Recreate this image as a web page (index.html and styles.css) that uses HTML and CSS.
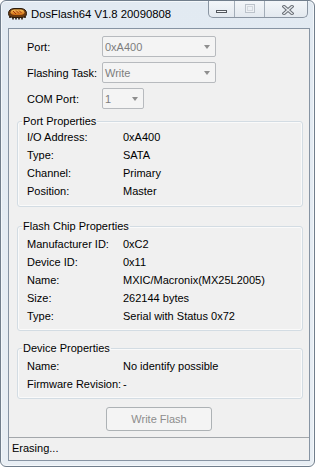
FILE: index.html
```
<!DOCTYPE html>
<html lang="en">
<head>
<meta charset="utf-8">
<title>DosFlash64 V1.8 20090808</title>
<link rel="stylesheet" href="styles.css">
</head>
<body>
<div class="window">
  <div class="titlebar">
    <svg class="app-icon" width="21" height="13" viewBox="0 0 21 13">
      <defs>
        <linearGradient id="chipTop" x1="0" y1="0" x2="0" y2="1">
          <stop offset="0" stop-color="#f6c25a"/>
          <stop offset="1" stop-color="#d06a10"/>
        </linearGradient>
      </defs>
      <path d="M3 9 L3 11 M6 10 L6 12.5 M9 10 L9 12.5 M12 10 L12 12.5 M15 10 L15 12.5 M18 9 L18 11" stroke="#2a1a0a" stroke-width="1.6"/>
      <path d="M1.5 6.5 Q1.5 2 7 1.5 L14 1.5 Q19.5 2 19.5 6.5 Q19.5 10.5 14 10.5 L7 10.5 Q1.5 10.5 1.5 6.5 Z" fill="#6a3a10" stroke="#2a1a0a" stroke-width="1"/>
      <path d="M3.5 5.5 Q4 2.8 7.5 2.6 L13.5 2.6 Q17 2.8 17.5 5.5 Q17 7.8 13.5 8 L7.5 8 Q4 7.8 3.5 5.5 Z" fill="url(#chipTop)"/>
      <path d="M6 4 L9 7 M9 3.5 L12 6.5 M12 3.5 L14.5 6" stroke="#a0300c" stroke-width="1"/>
    </svg>
    <span class="title">DosFlash64 V1.8 20090808</span>
    <div class="caption-buttons">
      <div class="cap cap-min"><span class="glyph-min"></span></div>
      <div class="cap cap-max"><span class="glyph-max"></span></div>
      <div class="cap cap-close">
        <svg width="12" height="10" viewBox="0 0 12 10">
          <path d="M2 1.5 L10 8.5 M10 1.5 L2 8.5" stroke="#6a6f76" stroke-width="3.4" stroke-linecap="square"/>
          <path d="M2 1.5 L10 8.5 M10 1.5 L2 8.5" stroke="#e4e8ec" stroke-width="1.4" stroke-linecap="square"/>
        </svg>
      </div>
    </div>
  </div>
  <div class="client">
    <div class="settings">
      <span class="setting-label">Port:</span>
      <div class="combo combo-wide"><span class="combo-text">0xA400</span><span class="combo-arrow"></span></div>
      <span class="setting-label">Flashing Task:</span>
      <div class="combo combo-wide"><span class="combo-text">Write</span><span class="combo-arrow"></span></div>
      <span class="setting-label">COM Port:</span>
      <div class="combo combo-narrow"><span class="combo-text">1</span><span class="combo-arrow"></span></div>
    </div>

    <fieldset class="group group-port">
      <legend>Port Properties</legend>
      <div class="props">
        <span>I/O Address:</span><span>0xA400</span>
        <span>Type:</span><span>SATA</span>
        <span>Channel:</span><span>Primary</span>
        <span>Position:</span><span>Master</span>
      </div>
    </fieldset>

    <fieldset class="group group-chip">
      <legend>Flash Chip Properties</legend>
      <div class="props">
        <span>Manufacturer ID:</span><span>0xC2</span>
        <span>Device ID:</span><span>0x11</span>
        <span>Name:</span><span>MXIC/Macronix(MX25L2005)</span>
        <span>Size:</span><span>262144 bytes</span>
        <span>Type:</span><span>Serial with Status 0x72</span>
      </div>
    </fieldset>

    <fieldset class="group group-device">
      <legend>Device Properties</legend>
      <div class="props">
        <span>Name:</span><span>No identify possible</span>
        <span>Firmware Revision:</span><span>-</span>
      </div>
    </fieldset>

    <div class="actions">
      <button class="btn" type="button" disabled>Write Flash</button>
    </div>

    <div class="statusbar">Erasing...</div>
  </div>
</div>
</body>
</html>
```

FILE: styles.css
```
html, body {
  margin: 0;
  padding: 0;
  background: #ffffff;
}

body {
  font-family: "Liberation Sans", Arial, sans-serif;
  font-size: 11px;
  color: #000;
}

.window {
  box-sizing: border-box;
  width: 315px;
  height: 467px;
  border: 1px solid #717e8c;
  border-radius: 6px;
  background: linear-gradient(#e2eaf2, #e8eef4);
  box-shadow: inset 0 0 0 1px #f4f8fb;
  display: flex;
  flex-direction: column;
}

.titlebar {
  height: 27px;
  flex: none;
  display: flex;
  align-items: flex-start;
  padding-left: 6px;
}

.app-icon {
  margin-top: 6px;
  margin-right: 3px;
  flex: none;
}

.title {
  font-size: 11.3px;
  line-height: 14px;
  margin-top: 6px;
  white-space: nowrap;
}

.caption-buttons {
  margin-left: auto;
  margin-right: 6px;
  height: 17px;
  box-sizing: border-box;
  display: flex;
  border: 1px solid #8a95a2;
  border-top: none;
  border-radius: 0 0 5px 5px;
  overflow: hidden;
  background: linear-gradient(#f3f6f9, #e3e9ef);
}

.cap {
  height: 16px;
  display: flex;
  justify-content: center;
  align-items: flex-start;
}

.cap-min {
  width: 25px;
}

.cap-max {
  width: 29px;
  border-left: 1px solid #a3adb8;
}

.cap-close {
  width: 43px;
  border-left: 1px solid #a3adb8;
  padding-left: 3px;
  box-sizing: border-box;
}

.glyph-min {
  width: 11px;
  height: 3px;
  margin-top: 9px;
  box-sizing: border-box;
  border: 1px solid #54595f;
  background: #f5f7f9;
}

.glyph-max {
  width: 10px;
  height: 9px;
  margin-top: 3px;
  box-sizing: border-box;
  border: 1px solid #bcc3cb;
  box-shadow: inset 0 0 0 1px #eef1f4, inset 0 0 0 2px #d3d8de;
}

.cap-close svg {
  margin-top: 4px;
}

.client {
  box-sizing: border-box;
  height: 433px;
  margin: 0 4px 0 7px;
  border: 1px solid #8794a3;
  background: #f0f0f0;
  display: flex;
  flex-direction: column;
}

.settings {
  margin-top: 7px;
  padding-left: 18px;
  display: grid;
  grid-template-columns: 75px auto;
  grid-auto-rows: 21px;
  row-gap: 5px;
  align-items: center;
  justify-items: start;
}

.setting-label {
  line-height: 14px;
}

.combo {
  box-sizing: border-box;
  height: 21px;
  border: 1px solid #b7babe;
  border-radius: 2px;
  background: #f4f4f4;
  display: flex;
  align-items: center;
  padding: 0 5px 0 2px;
  color: #7d7d7d;
}

.combo-wide {
  width: 114px;
}

.combo-narrow {
  width: 42px;
}

.combo-arrow {
  margin-left: auto;
  width: 0;
  height: 0;
  border-top: 4px solid #8e8e8e;
  border-left: 3.5px solid transparent;
  border-right: 3.5px solid transparent;
}

.group {
  margin: 0 6px 0 8px;
  border: 1px solid #d3dce3;
  border-radius: 3px;
  padding: 0 9px 5px 9px;
  min-inline-size: auto;
  box-shadow: inset 0 0 0 1px #fafafa;
}

.group legend {
  padding: 0 1px;
  margin-left: -5px;
  line-height: 14px;
}

.group-port {
  margin-top: 5px;
  padding-bottom: 6px;
}

.group-chip {
  margin-top: 12px;
  padding-top: 2px;
}

.group-device {
  margin-top: 10px;
  padding-top: 2px;
}

.props {
  display: grid;
  grid-template-columns: 96px auto;
  line-height: 18px;
  white-space: nowrap;
}

.actions {
  margin-top: 8px;
  display: flex;
  justify-content: center;
}

.btn {
  width: 106px;
  height: 24px;
  box-sizing: border-box;
  border: 1px solid #adb2b5;
  border-radius: 3px;
  background: #f4f4f4;
  color: #8d8d8d;
  font-family: "Liberation Sans", Arial, sans-serif;
  font-size: 11px;
  padding: 0;
}

.statusbar {
  margin-top: auto;
  height: 23px;
  box-sizing: border-box;
  border-top: 1px solid #a3a7ab;
  padding-left: 3px;
  line-height: 21px;
}
```
